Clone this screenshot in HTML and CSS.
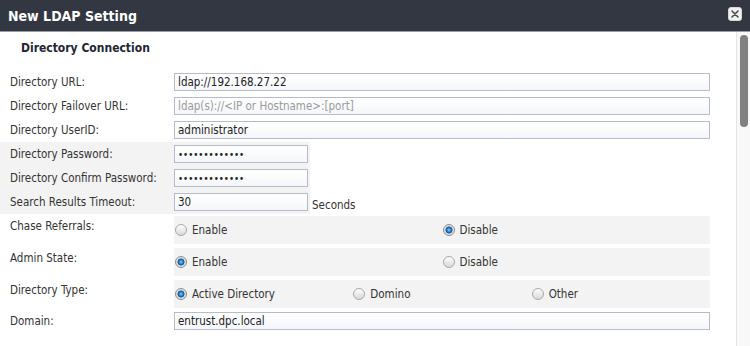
FILE: index.html
```html
<!DOCTYPE html>
<html>
<head>
<meta charset="utf-8">
<title>New LDAP Setting</title>
<link rel="stylesheet" href="styles.css">
</head>
<body>
<div class="dialog">
  <div class="titlebar">
    <span class="title">New LDAP Setting</span>
    <button class="close" aria-label="Close">
      <svg width="14" height="14" viewBox="0 0 14 14"><rect x="0.5" y="0.5" width="13" height="13" rx="2.5" fill="#f2f2f2" stroke="#d8d8d8"/><path d="M4 4 L10 10 M10 4 L4 10" stroke="#4a4a4a" stroke-width="1.6" stroke-linecap="round"/></svg>
    </button>
  </div>
  <div class="body">
    <div class="content">
      <h2 class="section">Directory Connection</h2>

      <div class="row"><span class="lbl">Directory URL:</span><input class="txt wide" type="text" value="ldap://192.168.27.22"></div>
      <div class="row"><span class="lbl">Directory Failover URL:</span><input class="txt wide" type="text" placeholder="ldap(s)://<IP or Hostname>:[port]"></div>
      <div class="row"><span class="lbl">Directory UserID:</span><input class="txt wide" type="text" value="administrator"></div>

      <div class="row"><div class="pair"><span class="lbl">Directory Password:</span><input class="txt short pw" type="password" value="abcdefghijklm"></div></div>
      <div class="row"><div class="pair"><span class="lbl">Directory Confirm Password:</span><input class="txt short pw" type="password" value="abcdefghijklm"></div></div>
      <div class="row"><div class="pair"><span class="lbl">Search Results Timeout:</span><input class="txt short" type="text" value="30"></div><span class="unit">Seconds</span></div>

      <div class="row radio-row">
        <span class="lbl">Chase Referrals:</span>
        <div class="opts two">
          <label class="opt"><input class="rad" type="radio" name="chase">Enable</label>
          <label class="opt"><input class="rad" type="radio" name="chase" checked>Disable</label>
        </div>
      </div>
      <div class="row radio-row">
        <span class="lbl">Admin State:</span>
        <div class="opts two">
          <label class="opt"><input class="rad" type="radio" name="admin" checked>Enable</label>
          <label class="opt"><input class="rad" type="radio" name="admin">Disable</label>
        </div>
      </div>
      <div class="row radio-row">
        <span class="lbl">Directory Type:</span>
        <div class="opts three">
          <label class="opt"><input class="rad" type="radio" name="dtype" checked>Active Directory</label>
          <label class="opt"><input class="rad" type="radio" name="dtype">Domino</label>
          <label class="opt"><input class="rad" type="radio" name="dtype">Other</label>
        </div>
      </div>

      <div class="row domain"><span class="lbl">Domain:</span><input class="txt wide" type="text" value="entrust.dpc.local"></div>
    </div>
    <div class="scroll"><div class="thumb"></div></div>
  </div>
</div>
</body>
</html>
```
FILE: styles.css
```css
html, body {
  margin: 0;
  padding: 0;
}
body {
  width: 750px;
  height: 346px;
  overflow: hidden;
  background: #fff;
  font-family: "DejaVu Sans Condensed", "DejaVu Sans", sans-serif;
  font-size: 11.5px;
  color: #333;
}
.dialog {
  display: flex;
  flex-direction: column;
  height: 346px;
}
.titlebar {
  height: 31px;
  flex: none;
  background: #333741;
  border-bottom: 1px solid #989ca4;
  display: flex;
  align-items: center;
  justify-content: space-between;
  padding: 0 8px;
}
.title {
  color: #fff;
  font-weight: bold;
  font-size: 14px;
}
.close {
  border: 0;
  padding: 0;
  margin: -3px 0 0 0;
  background: none;
  width: 14px;
  height: 14px;
  display: block;
}
.close svg {
  display: block;
}
.body {
  flex: 1;
  display: flex;
  min-height: 0;
}
.content {
  flex: 1;
  padding-right: 26px;
}
.section {
  margin: 0 0 14px 0;
  padding: 8px 0 0 21px;
  font-size: 12px;
  line-height: 16px;
  font-weight: bold;
  color: #1f2633;
}
.row {
  display: flex;
  align-items: center;
  height: 24px;
}
.lbl {
  flex: none;
  width: 174px;
  box-sizing: border-box;
  padding-left: 10px;
  line-height: 18px;
  white-space: nowrap;
}
.txt {
  box-sizing: border-box;
  height: 18px;
  margin: 0;
  padding: 0 3px;
  border: 1px solid #b7bccb;
  border-radius: 0;
  background: linear-gradient(#ffffff, #f4f6fa);
  font: inherit;
  color: #222;
  outline: none;
}
.txt::placeholder {
  color: #9a9a9a;
}
.pw {
  font-size: 9.6px;
}
.wide {
  width: 536px;
}
.short {
  width: 134px;
}
.pair {
  display: flex;
  align-items: center;
  width: 310px;
  height: 100%;
  background: #f3f3f3;
}
.unit {
  margin-left: 2px;
  padding-top: 5px;
}
.radio-row {
  height: 28px;
  align-items: flex-start;
  margin-top: 2px;
  margin-bottom: 4px;
}
.radio-row .lbl {
  padding-top: 1px;
}
.opts {
  flex: none;
  width: 536px;
  height: 28px;
  display: grid;
  align-items: center;
  background: #f3f3f3;
  padding-left: 1px;
  box-sizing: border-box;
}
.opts.two {
  grid-template-columns: 1fr 1fr;
}
.opts.three {
  grid-template-columns: 1fr 1fr 1fr;
}
.opt {
  display: flex;
  align-items: center;
  line-height: 18px;
}
.rad {
  appearance: none;
  -webkit-appearance: none;
  width: 12px;
  height: 12px;
  margin: 0 5px 0 0;
  border-radius: 50%;
  border: 1px solid #a9a9a9;
  box-sizing: border-box;
  background: linear-gradient(#fdfdfd, #d9d9d9);
  flex: none;
}
.rad:checked {
  border-color: #8a8f96;
  background: radial-gradient(circle, #8ccfff 0, #2b86cf 1.8px, #164f82 3.2px, #d4d7db 3.8px, #eeeeee 6px);
}
.domain {
  align-items: flex-start;
}
.scroll {
  flex: none;
  width: 15px;
  box-sizing: border-box;
  border-left: 1px solid #e4e4e4;
  background: #f8f8f8;
  padding: 3px 0 0 3px;
}
.thumb {
  width: 8px;
  height: 92px;
  border-radius: 4px;
  background: #808080;
}
```
